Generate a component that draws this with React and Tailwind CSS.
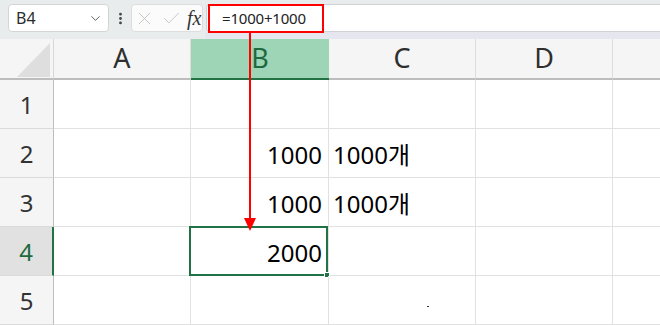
import React from "react";
import { ChevronDown, X, Check, EllipsisVertical } from "lucide-react";

const cols = [
  { key: "A", w: "w-[137px]" },
  { key: "B", w: "w-[138px]" },
  { key: "C", w: "w-[147px]" },
  { key: "D", w: "w-[137px]" },
];

const rows = [
  { n: 1, b: "", c: "" },
  { n: 2, b: "1000", c: "1000개" },
  { n: 3, b: "1000", c: "1000개" },
  { n: 4, b: "2000", c: "" },
  { n: 5, b: "", c: "" },
];

function FormulaBar() {
  return (
    <div className="relative h-[39px] bg-[#e8ecec]">
      <div className="flex items-start pt-[4px]">
        {/* name box */}
        <div className="ml-[8px] flex h-[28px] w-[101px] items-center justify-between rounded-[4px] border border-[#d4d6d6] bg-white pl-[7px] pr-[5px]">
          <span className="text-[16px] text-[#2b2b2b]">B4</span>
          <ChevronDown size={15} strokeWidth={1.5} className="text-[#555]" />
        </div>
        <div className="flex h-[28px] w-[22px] items-center justify-center">
          <EllipsisVertical size={15} strokeWidth={2.5} className="text-[#444]" />
        </div>
        {/* cancel / enter / fx */}
        <div className="flex h-[28px] w-[72px] items-center gap-[4px] rounded-[4px] border border-[#dcdede] bg-[#fbfbfb] pl-[2px]">
          <X size={21} strokeWidth={0.9} className="text-[#b9b9b9]" />
          <Check size={21} strokeWidth={0.9} className="ml-[2px] text-[#b9b9b9]" />
          <span className="ml-[1px] font-['Liberation_Serif',serif] text-[20px] italic leading-none text-[#333]">
            fx
          </span>
        </div>
        {/* formula input */}
        <div className="ml-[3px] flex h-[28px] flex-1 items-center rounded-l-[4px] border-y border-l border-[#d2d2d6] bg-white pl-[15px]">
          <span className="text-[15px] tracking-[-0.2px] text-[#222]">=1000+1000</span>
        </div>
      </div>
      <div className="absolute bottom-0 left-[205px] right-0 h-[7px] bg-[#e6e7ee]" />
    </div>
  );
}

function HeaderRow() {
  return (
    <div className="flex h-[41px] bg-[#f5f5f5]">
      <div className="relative w-[54px] border-r border-b-2 border-r-[#d8d8d8] border-b-[#bdbdbd]">
        <svg className="absolute left-0 top-0" width="54" height="41">
          <polygon points="50,4 50,38 17,38" fill="#dedede" />
        </svg>
      </div>
      {cols.map((c) =>
        c.key === "B" ? (
          <div
            key={c.key}
            className={`${c.w} flex items-center justify-center border-b-2 border-[#217346] bg-[#9fd5b7] text-[27px] text-[#1d6b3f]`}
          >
            {c.key}
          </div>
        ) : (
          <div
            key={c.key}
            className={`${c.w} flex items-center justify-center border-r border-b-2 border-r-[#dcdcdc] border-b-[#bdbdbd] text-[27px] text-[#2f2f2f]`}
          >
            {c.key}
          </div>
        )
      )}
      <div className="flex-1 border-b-2 border-[#bdbdbd]" />
    </div>
  );
}

function GridRow({ row }) {
  const sel = row.n === 4;
  return (
    <div className="flex h-[49px]">
      <div
        className={`flex w-[54px] items-center justify-center border-b border-b-[#dadada] pt-[2px] text-[24px] ${
          sel
            ? "border-r-2 border-r-[#217346] bg-[#e1e1e1] text-[#1d6b3f]"
            : "border-r border-r-[#bdbdbd] bg-[#f5f5f5] text-[#333]"
        }`}
      >
        {row.n}
      </div>
      <div className="w-[137px] border-r border-b border-[#e1e1e1]" />
      <div className="relative flex w-[138px] items-center justify-end border-r border-b border-[#e1e1e1] pr-[6px] pt-[4px] text-[24px] text-black">
        {row.b}
        {sel && (
          <div className="absolute -left-[2px] -top-[1px] right-0 -bottom-[1px] border-2 border-[#217346]">
            <div className="absolute -right-[4px] -bottom-[4px] h-[6px] w-[6px] border border-white bg-[#217346]" />
          </div>
        )}
      </div>
      <div className="flex w-[147px] items-center border-r border-b border-[#e1e1e1] pl-[4px] pt-[4px] font-['Noto_Sans','Noto_Sans_CJK_KR',sans-serif] text-[24px] text-black">
        {row.c}
      </div>
      <div className="w-[137px] border-r border-b border-[#e1e1e1]" />
      <div className="flex-1 border-b border-[#e1e1e1]" />
    </div>
  );
}

export default function App() {
  return (
    <div className="relative h-[325px] w-[660px] overflow-hidden bg-white font-['Noto_Sans','Noto_Sans_CJK_KR',sans-serif]">
      <FormulaBar />
      <HeaderRow />
      {rows.map((r) => (
        <GridRow key={r.n} row={r} />
      ))}

      {/* annotation: red box + arrow */}
      <div className="pointer-events-none absolute left-[208px] top-[4px] h-[29px] w-[116px] border-2 border-[#ff0000]" />
      <svg className="pointer-events-none absolute left-0 top-0" width="660" height="325">
        <line x1="250" y1="33" x2="250" y2="220" stroke="#ff0000" strokeWidth="2" />
        <polygon points="244,218 256,218 250,231" fill="#ff0000" />
      </svg>
      <div className="absolute left-[427px] top-[306px] h-[1px] w-[2px] bg-[#333]" />
    </div>
  );
}
